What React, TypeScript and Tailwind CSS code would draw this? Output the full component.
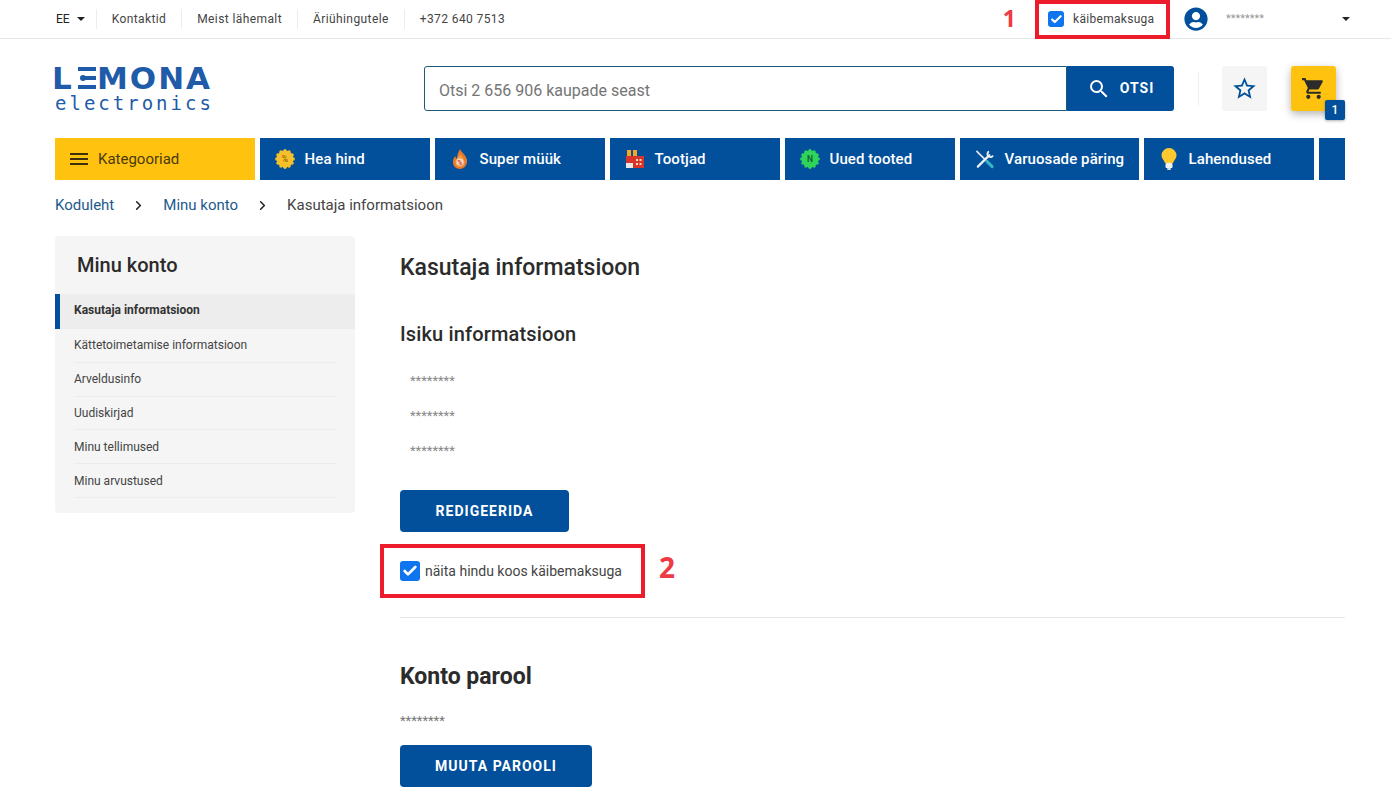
import { Check, ChevronRight } from 'lucide-react';
import { FaUserCircle } from 'react-icons/fa';
import { MdSearch, MdStarBorder, MdShoppingCart, MdMenu } from 'react-icons/md';

const topLinks = ['Kontaktid', 'Meist lähemalt', 'Äriühingutele', '+372 640 7513'];

const sideLinks = [
  'Kättetoimetamise informatsioon',
  'Arveldusinfo',
  'Uudiskirjad',
  'Minu tellimused',
  'Minu arvustused',
];

function Caret() {
  return <span className="inline-block w-0 h-0 border-x-[4px] border-x-transparent border-t-[4px] border-t-[#222]" />;
}

function Badge({ color, ink, label }: { color: string; ink: string; label: string }) {
  const bumps = [0, 30, 60, 90, 120, 150, 180, 210, 240, 270, 300, 330];
  return (
    <svg width="20" height="20" viewBox="0 0 20 20">
      {bumps.map((a) => (
        <circle
          key={a}
          cx={10 + 8.2 * Math.cos((a * Math.PI) / 180)}
          cy={10 + 8.2 * Math.sin((a * Math.PI) / 180)}
          r="1.7"
          fill={color}
        />
      ))}
      <circle cx="10" cy="10" r="8.4" fill={color} />
      <text x="10" y="13" textAnchor="middle" fontSize="8.500" fontWeight="700" fontFamily="Roboto, sans-serif" fill={ink}>
        {label}
      </text>
    </svg>
  );
}

function Flame() {
  return (
    <svg width="20" height="22" viewBox="0 0 20 22">
      <path d="M10 1c1 3 6 6 7 11 .6 5-3 9-7 9s-7.600-3-7-8c.3-2.500 1.500-4 2.500-5 0 1.500.5 2.500 1.500 3C7 8 8 4 10 1z" fill="#e8792a" />
      <path d="M10 6c1 2 4 4 4.500 7.500C15 17 12.500 19 10 19s-5-2-4.500-5.500C6 10 9 9 10 6z" fill="#f0a04a" />
      <circle cx="10" cy="14" r="3.600" fill="#f4d9c4" />
      <text x="10" y="16.500" textAnchor="middle" fontSize="6.500" fontWeight="700" fontFamily="Roboto, sans-serif" fill="#d8402a">%</text>
    </svg>
  );
}

function Factory() {
  return (
    <svg width="20" height="20" viewBox="0 0 20 20">
      <rect x="2" y="1" width="4" height="8" fill="#f5a623" />
      <rect x="8" y="1" width="4" height="8" fill="#f5a623" />
      <rect x="1" y="7" width="18" height="12" fill="#d9342b" />
      <rect x="1" y="14" width="7" height="5" fill="#e8e8e8" />
      <rect x="11" y="10" width="2" height="2" fill="#f8e0b0" />
      <rect x="14.500" y="10" width="2" height="2" fill="#f8e0b0" />
      <rect x="11" y="14" width="2" height="2" fill="#f8e0b0" />
      <rect x="14.500" y="14" width="2" height="2" fill="#f8e0b0" />
    </svg>
  );
}

function Tools() {
  return (
    <svg width="21" height="21" viewBox="0 0 21 21" fill="none" strokeLinecap="round">
      <path d="M2 2l2.500 2.500L11 11" stroke="#dfe6ea" strokeWidth="1.800" />
      <path d="M3 18L15 6" stroke="#eef2f4" strokeWidth="2.400" />
      <path d="M14 2.500c-1.500 1.500-1 3.500 0 4.500s3 1.500 4.500 0" stroke="#eef2f4" strokeWidth="2" />
      <path d="M12.500 12.500L18 18" stroke="#35b6c9" strokeWidth="3.200" />
    </svg>
  );
}

function Bulb() {
  return (
    <svg width="16" height="24" viewBox="0 0 16 24">
      <path d="M8 1a7.500 7.500 0 0 0-7.500 7.500c0 3 2.500 4.500 3.500 7.500h8c1-3 3.500-4.500 3.500-7.500A7.500 7.500 0 0 0 8 1z" fill="#fdc92f" />
      <rect x="4.500" y="16" width="7" height="5" rx="1" fill="#eef2f4" />
      <rect x="6" y="21" width="4" height="2" rx="1" fill="#cfd8dc" />
    </svg>
  );
}

function NavItem({ icon, label, width }: { icon: React.ReactNode; label: string; width: string }) {
  return (
    <a className={`${width} h-[42px] shrink-0 bg-[#02509b] text-white flex items-center pl-[15px] text-[15px] font-medium tracking-[0.1px]`}>
      <span className="w-[20px] flex justify-center mr-[9.500px]">{icon}</span>
      {label}
    </a>
  );
}

function Tick({ size }: { size: string }) {
  return (
    <span className={`${size} rounded-[3px] bg-[#0f75ee] flex items-center justify-center text-white`}>
      <Check className="w-[80%] h-[80%]" strokeWidth={4} />
    </span>
  );
}

function PrimaryButton({ label, width }: { label: string; width: string }) {
  return (
    <button className={`${width} h-[42px] rounded-[4px] bg-[#02509b] text-white text-[14px] font-bold tracking-[1px] flex items-center justify-center`}>
      {label}
    </button>
  );
}

export default function App() {
  return (
    <div className="relative min-h-[807px] bg-white text-[#2b2b2b] overflow-hidden font-['Roboto',sans-serif]">
      {/* Top strip */}
      <div className="h-[39px] border-b border-[#e8e8e8] pl-[56px] pr-[41px] flex items-center text-[12px] text-[#444]">
        <div className="flex items-center gap-[7px] pr-[11px] text-[#222] h-[20px] border-r border-[#ececec]">
          EE <Caret />
        </div>
        {topLinks.map((link, i) => (
          <a
            key={link}
            className={`px-[15px] h-[20px] flex items-center tracking-[0.4px] ${i < topLinks.length - 1 ? 'border-r border-[#ececec]' : ''}`}
          >
            {link}
          </a>
        ))}
        <div className="ml-auto flex items-center">
          <span className="mr-[19px] -mt-[2px] text-[23px] leading-none font-bold text-[#ee3a45] font-['Open_Sans',sans-serif]">1</span>
          <label className="w-[135px] h-[39px] border-[4px] border-[#ec1c2d] flex items-center pl-[9px] gap-[9px] tracking-[0.3px]">
            <Tick size="w-[16px] h-[16px]" />
            käibemaksuga
          </label>
          <FaUserCircle className="ml-[14px] w-[24px] h-[24px] text-[#02509b]" />
          <span className="ml-[18px] w-[116px] text-[11px] text-[#999] pt-px">********</span>
          <Caret />
        </div>
      </div>

      {/* Logo, search, actions */}
      <div className="px-[55px] pt-[27px] flex items-start">
        <div className="relative w-[369px] h-[46px] flex flex-col text-[#1f5ba8]">
          <span className="-ml-[3px] text-[31px] leading-[24px] font-bold font-['DejaVu_Sans',sans-serif] tracking-[2px]">
            L<span className="text-transparent">E</span>MONA
          </span>
          <span className="mt-[5px] text-[19px] leading-[17px] font-['DejaVu_Sans_Mono',monospace] tracking-[3px]">electronics</span>
          {/* stylised E of the logo: three bars, the middle one ending in a dot */}
          <span className="absolute left-[23px] top-[1px] w-[18px] h-[4px] bg-[#1f5ba8]" />
          <span className="absolute left-[29px] top-[10px] w-[12px] h-[4px] bg-[#1f5ba8]" />
          <span className="absolute left-[25px] top-[9px] w-[6px] h-[6px] rounded-full bg-[#1f5ba8]" />
          <span className="absolute left-[23px] top-[19px] w-[18px] h-[4px] bg-[#1f5ba8]" />
        </div>
        <div className="w-[750px] h-[45px] flex">
          <div className="flex-1 border border-[#1d5a7a] rounded-l-[3px] pl-[14px] pt-[5px] flex items-center text-[16px] text-[#757575]">
            Otsi 2 656 906 kaupade seast
          </div>
          <button className="w-[107px] bg-[#02509b] rounded-r-[3px] text-white flex items-center justify-center gap-[9px] text-[14px] font-bold tracking-[1px]">
            <MdSearch className="w-[24px] h-[24px]" />
            OTSI
          </button>
        </div>
        <span className="ml-[24px] mt-[6px] w-px h-[33px] bg-[#eeeeee]" />
        <div className="ml-[23px] w-[45px] h-[45px] rounded-[3px] bg-[#f5f5f5] flex items-center justify-center">
          <MdStarBorder className="w-[27px] h-[27px] text-[#02509b]" />
        </div>
        <div className="relative ml-[24px] w-[45px] h-[45px] rounded-[3px] bg-[#ffc20e] shadow-[0_3px_8px_rgba(0,0,0,0.3)] flex items-center justify-center">
          <MdShoppingCart className="w-[25px] h-[25px] text-[#2b2b2b]" />
          <span className="absolute left-[34px] top-[34px] w-[20px] h-[20px] rounded-[2px] bg-[#02509b] text-white text-[12px] font-medium flex items-center justify-center shadow-[0_1px_3px_rgba(0,0,0,0.3)]">
            1
          </span>
        </div>
      </div>

      {/* Category nav */}
      <nav className="mr-[46px] ml-[55px] mt-[26px] flex gap-[5px] overflow-hidden">
        <a className="w-[200px] h-[42px] shrink-0 bg-[#ffc20e] flex items-center pl-[12px] text-[15px] text-[#4a3a10]">
          <MdMenu className="w-[24px] h-[24px] mr-[7px] text-[#3d2f08]" />
          Kategooriad
        </a>
        <NavItem width="w-[170px]" label="Hea hind" icon={<Badge color="#f6c02c" ink="#9a6b00" label="%" />} />
        <NavItem width="w-[170px]" label="Super müük" icon={<Flame />} />
        <NavItem width="w-[170px]" label="Tootjad" icon={<Factory />} />
        <NavItem width="w-[170px]" label="Uued tooted" icon={<Badge color="#2fd45a" ink="#0f6b33" label="N" />} />
        <NavItem width="w-[179px]" label="Varuosade päring" icon={<Tools />} />
        <NavItem width="w-[170px]" label="Lahendused" icon={<Bulb />} />
        <span className="w-[26px] h-[42px] shrink-0 bg-[#02509b]" />
      </nav>

      {/* Breadcrumbs */}
      <div className="ml-[55px] mt-[15px] h-[20px] flex items-center text-[15px]">
        <a className="text-[#1d5a8c]">Koduleht</a>
        <ChevronRight className="mx-[17px] w-[15px] h-[15px] text-[#222]" strokeWidth={2.500} />
        <a className="text-[#1d5a8c]">Minu konto</a>
        <ChevronRight className="mx-[17px] w-[15px] h-[15px] text-[#222]" strokeWidth={2.500} />
        <span className="text-[#444]">Kasutaja informatsioon</span>
      </div>

      <div className="ml-[55px] mr-[46px] mt-[21px] flex gap-[45px] items-start">
        {/* Sidebar */}
        <aside className="w-[300px] h-[277px] shrink-0 rounded-[4px] bg-[#f5f5f5]">
          <h3 className="pl-[22px] pt-[17px] text-[20px] leading-[24px] font-medium text-[#2b2b2b]">Minu konto</h3>
          <div className="mt-[17px] h-[35px] bg-[#ededed] border-l-[5px] border-[#02509b] pl-[14px] pb-[4px] flex items-center text-[12px] font-bold text-[#333]">
            Kasutaja informatsioon
          </div>
          <ul className="ml-[19px] mr-[19px] text-[12px] text-[#444]">
            {sideLinks.map((link) => (
              <li key={link} className="h-[33.800px] flex items-center border-b border-[#ececec]">
                {link}
              </li>
            ))}
          </ul>
        </aside>

        {/* Main column */}
        <main className="flex-1">
          <h1 className="mt-[18px] text-[23px] leading-[28px] font-medium text-[#2b2b2b]">Kasutaja informatsioon</h1>
          <h2 className="mt-[39px] text-[20px] leading-[26px] font-medium tracking-[0.15px] text-[#2b2b2b]">Isiku informatsioon</h2>
          <div className="mt-[16px] pl-[10px] text-[13px] text-[#888]">
            <p className="h-[35px] leading-[35px]">********</p>
            <p className="h-[35px] leading-[35px]">********</p>
            <p className="h-[35px] leading-[35px]">********</p>
          </div>
          <div className="mt-[22px]">
            <PrimaryButton width="w-[169px]" label="REDIGEERIDA" />
          </div>
          <div className="flex items-center mt-[12px] -ml-[20px]">
            <label className="w-[265px] h-[54px] border-[4px] border-[#ec1c2d] flex items-center pl-[16px] gap-[5px] text-[14px] text-[#444]">
              <Tick size="w-[20px] h-[20px]" />
              näita hindu koos käibemaksuga
            </label>
            <span className="ml-[14px] -mt-[8px] text-[28px] leading-none font-bold text-[#ee3a45] font-['Open_Sans',sans-serif]">2</span>
          </div>
          <div className="mt-[19px] border-t border-[#e8e8e8]" />
          <h2 className="mt-[45px] text-[23px] leading-[28px] font-bold text-[#2b2b2b]">Konto parool</h2>
          <p className="mt-[22px] text-[13px] leading-[16px] text-[#777]">********</p>
          <div className="mt-[16px]">
            <PrimaryButton width="w-[192px]" label="MUUTA PAROOLI" />
          </div>
        </main>
      </div>
    </div>
  );
}
